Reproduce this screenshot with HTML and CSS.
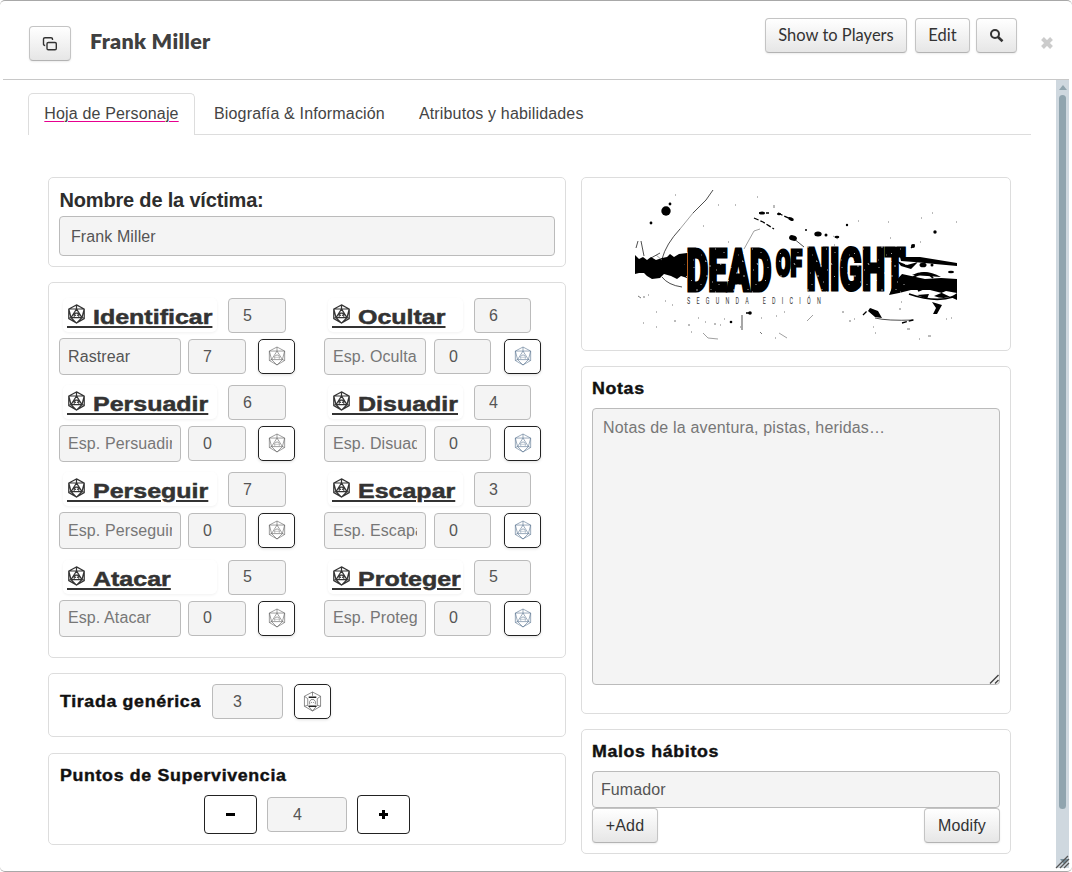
FILE: index.html
```html
<!DOCTYPE html>
<html lang="es">
<head>
<meta charset="utf-8">
<title>Frank Miller</title>
<link rel="stylesheet" href="styles.css">
</head>
<body>
<svg class="defs" aria-hidden="true">
  <symbol id="d20" viewBox="0 0 20 22">
    <path d="M10 1 18.5 5.5V16L10 21 1.500 16V5.500ZM10 1V5.500M1.500 5.500 10 5.500 18.500 5.500M10 5.500 4 15H16ZM1.500 5.500 4 15 10 21 16 15 18.500 5.500M1.500 16 4 15M18.500 16 16 15M7.500 14V11.500L9 10H11L12.500 11.500V14M8.500 12.500H9.500M10.500 12.500H11.500" fill="none" stroke="currentColor"/>
  </symbol>
  <symbol id="grip" viewBox="0 0 10 10"><path d="M1 9.500 9.500 1M6 9.500 9.500 6" fill="none" stroke="#444" stroke-width="1.400"/></symbol>
</svg>
<div class="dialog">
  <header class="titlebar">
    <button class="btn popout"><svg width="16" height="16" viewBox="0 0 16 16" fill="none" stroke="#333" stroke-width="1.400"><path d="M3.200 9.500H3Q1.500 9.500 1.500 8V3Q1.500 1.700 3 1.700H9Q10.500 1.700 10.500 3V4"/><rect x="5" y="6.500" width="9.300" height="7.300" rx="1.300"/></svg></button>
    <h1 class="name">Frank Miller</h1>
    <div class="actions">
      <button class="btn">Show to Players</button>
      <button class="btn">Edit</button>
      <button class="btn search"><svg width="15" height="15" viewBox="0 0 15 15" fill="none" stroke="#333"><circle cx="6" cy="6" r="4" stroke-width="2"/><path d="M9 9 13.500 13.200" stroke-width="2.600"/></svg></button>
    </div>
    <svg class="close" width="14" height="14" viewBox="0 0 14 14"><path d="M2.500 2.500 11.500 11.500M11.500 2.500 2.500 11.500" stroke="#ccc" stroke-width="4"/></svg>
  </header>
  <div class="body">
    <main class="content">
      <nav class="tabs">
        <a class="tab active"><span>Hoja de Personaje</span></a>
        <a class="tab">Biografía &amp; Información</a>
        <a class="tab">Atributos y habilidades</a>
      </nav>
      <div class="sheet">
        <div class="left">
          <section class="card victim">
            <h2 class="victim-label">Nombre de la víctima:</h2>
            <input class="field full" value="Frank Miller">
          </section>
          <section class="card skills">
            <div class="skill">
              <div class="top"><button class="roll"><svg class="die"><use href="#d20"/></svg><span>Identificar</span></button><input class="field num" value="5"></div>
              <div class="bottom"><input class="field spec" value="Rastrear"><input class="field num" value="7"><button class="dice"><svg class="die"><use href="#d20"/></svg></button></div>
            </div>
            <div class="skill narrow">
              <div class="top"><button class="roll"><svg class="die"><use href="#d20"/></svg><span>Ocultar</span></button><input class="field num" value="6"></div>
              <div class="bottom"><input class="field spec" placeholder="Esp. Ocultar"><input class="field num" value="0"><button class="dice blue"><svg class="die"><use href="#d20"/></svg></button></div>
            </div>
            <div class="skill">
              <div class="top"><button class="roll"><svg class="die"><use href="#d20"/></svg><span>Persuadir</span></button><input class="field num" value="6"></div>
              <div class="bottom"><input class="field spec" placeholder="Esp. Persuadir"><input class="field num" value="0"><button class="dice"><svg class="die"><use href="#d20"/></svg></button></div>
            </div>
            <div class="skill narrow">
              <div class="top"><button class="roll"><svg class="die"><use href="#d20"/></svg><span>Disuadir</span></button><input class="field num" value="4"></div>
              <div class="bottom"><input class="field spec" placeholder="Esp. Disuadir"><input class="field num" value="0"><button class="dice blue"><svg class="die"><use href="#d20"/></svg></button></div>
            </div>
            <div class="skill">
              <div class="top"><button class="roll"><svg class="die"><use href="#d20"/></svg><span>Perseguir</span></button><input class="field num" value="7"></div>
              <div class="bottom"><input class="field spec" placeholder="Esp. Perseguir"><input class="field num" value="0"><button class="dice"><svg class="die"><use href="#d20"/></svg></button></div>
            </div>
            <div class="skill narrow">
              <div class="top"><button class="roll"><svg class="die"><use href="#d20"/></svg><span>Escapar</span></button><input class="field num" value="3"></div>
              <div class="bottom"><input class="field spec" placeholder="Esp. Escapar"><input class="field num" value="0"><button class="dice blue"><svg class="die"><use href="#d20"/></svg></button></div>
            </div>
            <div class="skill">
              <div class="top"><button class="roll"><svg class="die"><use href="#d20"/></svg><span>Atacar</span></button><input class="field num" value="5"></div>
              <div class="bottom"><input class="field spec" placeholder="Esp. Atacar"><input class="field num" value="0"><button class="dice"><svg class="die"><use href="#d20"/></svg></button></div>
            </div>
            <div class="skill narrow">
              <div class="top"><button class="roll"><svg class="die"><use href="#d20"/></svg><span>Proteger</span></button><input class="field num" value="5"></div>
              <div class="bottom"><input class="field spec" placeholder="Esp. Proteger"><input class="field num" value="0"><button class="dice blue"><svg class="die"><use href="#d20"/></svg></button></div>
            </div>
          </section>
          <section class="card generic">
            <h3 class="label">Tirada genérica</h3>
            <input class="field" value="3">
            <button class="dice"><svg width="19" height="21" viewBox="0 0 20 22" fill="none" stroke="#555"><path stroke-width=".7" d="M10 1 18.500 5.500V16L10 21 1.500 16V5.500ZM1.500 5.500 5 8V15L1.500 16M18.500 5.500 15 8V15L18.500 16M5 15 10 21 15 15M10 1V5M7 14V11L8.500 9H11.500L13 11V14M8.500 12H9.500M10.500 12H11.500"/><path d="M6 6.500H14M6 16H14" stroke="#222" stroke-width="1.600"/></svg></button>
          </section>
          <section class="card points">
            <h3 class="label">Puntos de Supervivencia</h3>
            <div class="stepper"><button class="step"><i class="minus"></i></button><input class="field" value="4"><button class="step"><i class="minus plus"></i></button></div>
          </section>
        </div>
        <div class="right">
          <section class="card logo">
            <svg width="428" height="172" viewBox="582 178 428 172">
              <defs>
                <pattern id="wear" width="37" height="43" patternUnits="userSpaceOnUse"><path d="M2 3h1v1M7 7v2M17 5l1 2M13 12h1M4 17v2M20 18l1 1M9 24h1M16 26v1M28 9v1M33 15h1M25 22l1 1M31 31v2M12 34h1M3 38l1 1M21 37v1M35 40h.7M8 31v1M27 2h.7M35 26v1" fill="none" stroke="#fff" stroke-width=".65"/></pattern>
              </defs>
              <path d="M635 255 639 259 643 257 647 260 651 257 656 260 662 258 667 257 670 254 674 257 679 254 687 253V278L681 276 677 279 671 276 664 274 660 278 652 279 647 276 644 273 639 273 635 274Z"/>
              <path d="M900 257 920 257 957 263V266L935 264 914 262 901 261ZM897 261 907 265 918 262 911 269 901 266ZM902 274 925 279 941 278 957 279V300L942 293 930 290 911 290 899 293 889 295 894 283ZM912 275Q925 268 941 277 928 276 912 275M917 295 929 294 927 299ZM934 296Q947 301 957 293L946 291M870 308 878 311 882 318 875 317 868 311ZM932 302 942 305 937 314 933 314 936 308Z"/>
              <path d="M911 279Q925 268 933 278M918 291Q930 284 944 291M909 294Q935 303 953 297" fill="none" stroke="#000" stroke-width="1.800"/>
              <g fill="none" stroke="#000" stroke-width=".7">
                <path d="M662 259Q666 244 680 229M651 258 660 253M644 256 641 241M636 248 638 241M662 277Q668 285 682 287M742 315V330M875 318Q887 321 914 320M793 238 804 247"/>
                <path stroke="#777" d="M680 229 693 213M703 333 708 338 718 339M779 333 787 338M744 249 754 231 760 229M833 236 838 239M807 321 813 315M656 255 662 260"/>
                <path d="M693 213 706 200 713 190"/>
                <path stroke-width="1.300" d="M754 218 763 222 774 229M759 213H769M778 213 784 216 793 220M746 313H753M863 315 867 311M902 323 913 320M911 248 915 244" stroke-dasharray="5 2"/>
              </g>
              <g>
                <circle cx="666" cy="211" r="4.700"/><circle cx="670" cy="204" r="1.400"/><circle cx="651" cy="223" r="1.400"/>
                <ellipse cx="762" cy="213" rx="3" ry="1.600"/><ellipse cx="779" cy="214" rx="2" ry="1.300"/><ellipse cx="791" cy="219" rx="3" ry="1.600" transform="rotate(25 791 219)"/><ellipse cx="793" cy="238" rx="4" ry="2.700" transform="rotate(15 793 238)"/><ellipse cx="818" cy="234" rx="3.700" ry="2.500"/><circle cx="826" cy="235" r="1.500"/><ellipse cx="837" cy="237" rx="2.300" ry="1.300"/><circle cx="847" cy="225" r="1.200"/><circle cx="935" cy="232" r="1.700"/><circle cx="913" cy="246" r="2"/><ellipse cx="923" cy="265" rx="3.500" ry="2.300"/><ellipse cx="951" cy="272" rx="3" ry="1.200"/><circle cx="932" cy="265" r="1.500"/><circle cx="731" cy="322" r="1.300"/><circle cx="750" cy="313" r="1.800"/><ellipse cx="873" cy="312" rx="4" ry="2" transform="rotate(40 873 312)"/><circle cx="806" cy="230" r="1"/>
              </g>
              <path d="M675 195h1M718 205h1M735 205h1M757 197h1M703 226h1M736 264h1M728 242h1M638 296l3 2M643 297h2M648 295h1M665 301h1M672 305h1M656 312h1M674 321h2M688 325h2M698 318h1M705 322h1M714 324h2M720 325h1M724 319h1M740 327h1M691 332h1M656 327h1M643 323h1M761 318h1M776 316h1M784 312h1M775 338h1M842 312h2M849 321h2M854 319h1M858 221h1M888 222h1M921 218h1M932 213h1M956 222h1M834 245h1M890 238h1M920 242h1M901 302h1M899 309h2M873 327h1M875 333h1M907 329h3M919 339h1M928 336h3M946 319h1M951 318h1M774 205v3M760 332l2 2" fill="none" stroke="#777" stroke-width="1"/>
              <g class="wordmark">
                <text x="686.500" y="290.500" font-size="59" textLength="85" lengthAdjust="spacingAndGlyphs">DEAD</text>
                <text x="776" y="275.500" font-size="37" textLength="26" lengthAdjust="spacingAndGlyphs">OF</text>
                <text x="806.500" y="290" font-size="59" textLength="99" lengthAdjust="spacingAndGlyphs">NIGHT</text>
              </g>
              <rect x="684" y="246" width="222" height="47" fill="url(#wear)"/>
              <text class="subtitle" transform="translate(687 304) scale(.6 1)" font-size="9" textLength="223">SEGUNDA EDICIÓN</text>
            </svg>
          </section>
          <section class="card notes">
            <h3 class="label">Notas</h3>
            <div class="area-wrap"><textarea class="field area" placeholder="Notas de la aventura, pistas, heridas…"></textarea><svg class="grip"><use href="#grip"/></svg></div>
          </section>
          <section class="card habits">
            <h3 class="label">Malos hábitos</h3>
            <input class="field habit" value="Fumador">
            <div class="habit-actions"><button class="btn arial add">+Add</button><button class="btn arial modify">Modify</button></div>
          </section>
        </div>
      </div>
    </main>
    <div class="scrollbar"><i class="arrow"></i><div class="thumb"></div></div>
  </div>
  <svg class="resize" width="15" height="15" viewBox="0 0 15 15"><path d="M5 5H14L9 10Z" fill="#78909c"/><path d="M1 14 13 2M5 14 14 5M9 14 14 9" stroke="#555" stroke-width="1.300"/></svg>
</div>
</body>
</html>
```
FILE: styles.css
```css
* { box-sizing: border-box; }
body { margin: 0; background: #fff; color: #333; font: 16px "Liberation Sans", Arial, sans-serif; }
button, input, textarea { font: inherit; margin: 0; }
h1, h2, h3 { margin: 0; }
.defs { position: absolute; width: 0; height: 0; }
.dialog { position: relative; width: 1072px; height: 872px; border: 1px solid #a8a8a8; border-width: 1px 0; border-radius: 5px; overflow: hidden; padding: 0 3px; }
.titlebar { height: 79px; border-bottom: 1px solid #c8c8c8; display: flex; align-items: flex-start; padding: 0 15px 0 26px; }
.btn { height: 35px; border: 1px solid #c4c4c4; border-bottom-color: #b3b3b3; border-radius: 4px; background: linear-gradient(#fff, #e6e6e6); box-shadow: 0 1px 2px rgba(0,0,0,.08); color: #333; padding: 0 12px; font-family: Lato, sans-serif; font-size: 16.5px; line-height: 31px; white-space: nowrap; }
.popout { width: 42px; margin-top: 25px; padding: 0; line-height: 0; }
.name { font: 800 21.5px/30px Lato, sans-serif; letter-spacing: .3px; color: #404040; margin: 25px auto 0 19px; }
.actions { display: flex; margin-top: 17px; }
.actions .btn:first-child { width: 142px; margin-right: 8px; }
.actions .btn:nth-child(2) { width: 55px; margin-right: 6px; }
.search { width: 41px; padding: 0; line-height: 0; }
.close { margin: 35px 0 0 23px; }
.body { display: flex; justify-content: space-between; height: 788px; }
.content { padding: 13px 0 0 25px; width: 1028px; }
.tabs { display: flex; height: 42px; border-bottom: 1px solid #ddd; color: #444; letter-spacing: .16px; }
.tab { height: 42px; line-height: 41px; padding: 0 17px; }
.tab.active { border: 1px solid #ddd; border-bottom: 0; border-radius: 5px 5px 0 0; background: #fff; padding: 0; width: 167px; text-align: center; margin-right: 2px; line-height: 39px; }
.active span { text-decoration-line: underline; text-decoration-color: #e6008f; text-decoration-thickness: 1px; text-underline-offset: 2px; }
.sheet { display: flex; gap: 15px; padding: 42px 0 0 20px; }
.left { width: 518px; }
.right { width: 430px; }
.card { border: 1px solid #ddd; border-radius: 5px; padding: 10px; }
.victim { height: 90px; }
.victim-label { font-size: 20px; line-height: 24px; letter-spacing: -.18px; margin: 0 0 4px .5px; color: #2d2d2d; }
.field { display: block; border: 1px solid #bbb; border-radius: 4px; background: #f4f4f4; color: #555; outline: 0; padding: 0 10px; min-width: 0; letter-spacing: .1px; }
.field::placeholder { color: #777; }
.full { width: 496px; height: 40px; padding: 1px 11px 0; }
.skills { height: 376px; margin-top: 15px; padding-top: 15px; display: grid; grid-template-columns: 265px 218px; grid-template-rows: repeat(4, 87.2px); }
.top { display: flex; justify-content: space-between; width: 227px; padding-left: 4px; }
.bottom { display: flex; align-items: center; margin-top: 5px; }
.num { width: 58px; height: 35px; padding: 0 14px; }
.spec { width: 122px; height: 37px; padding: 0 8px; margin-right: 7px; }
.roll { position: relative; width: 154px; height: 34px; border: 0; border-radius: 5px; box-shadow: 0 1px 3px rgba(0,0,0,.06); background: #fff; color: #333; padding: 0 0 0 4px; display: flex; align-items: flex-start; }
.roll .die { flex: none; width: 19px; height: 20px; margin: 6px 0 0; stroke-width: 1.35; }
.roll span { display: block; font: bold 21px/26px "Liberation Sans", Arial, sans-serif; -webkit-text-stroke: .5px #333; transform: scaleX(1.19); transform-origin: left; margin: 6px 0 0 7px; text-decoration: underline; text-decoration-thickness: 2px; text-underline-offset: 2px; }
.roll::before { content: ""; position: absolute; left: 4px; top: 28px; width: 27px; height: 2px; background: #333; }
.narrow .top { width: 207px; }
.narrow .roll { width: 135px; }
.narrow .num { width: 57px; }
.narrow .spec { width: 102px; margin-right: 8px; }
.dice { width: 37px; height: 35px; border: 1px solid #222; border-radius: 5px; background: #fff; box-shadow: 0 1px 3px rgba(0,0,0,.12); display: flex; align-items: center; justify-content: center; padding: 0 0 1px; color: #666; margin-left: 12px; }
.narrow .dice { margin-left: 13px; }
.dice .die { width: 18px; height: 20px; stroke-width: .7; }
.dice.blue { color: #5f7995; }
.label { font: bold 16px/20px "Liberation Sans", Arial, sans-serif; -webkit-text-stroke: .4px #111; letter-spacing: .6px; transform: scaleX(1.11); transform-origin: left; color: #111; white-space: nowrap; }
.generic { height: 64px; margin-top: 15px; display: flex; }
.generic .label { width: 152px; margin: 8px 0 0 1px; }
.generic .field { width: 71px; height: 35px; padding: 0 20px; }
.generic .dice { margin-left: 11px; }
.points { height: 92px; margin-top: 16px; padding-top: 12px; }
.points .label { margin-left: 1px; }
.stepper { display: flex; justify-content: center; align-items: center; gap: 10px; margin-top: 9px; }
.stepper .field { width: 80px; height: 35px; padding: 0 25px; }
.step { width: 53px; height: 39px; border: 1px solid #222; border-radius: 4px; background: #fff; display: flex; align-items: center; justify-content: center; padding: 0; }
.minus { width: 9px; height: 3px; background: #000; }
.plus { height: 9px; background: linear-gradient(#000, #000) center/9px 3px no-repeat, linear-gradient(#000, #000) center/3px 9px no-repeat; }
.logo { height: 174px; padding: 0; }
.logo svg { display: block; }
.wordmark { font-family: Roboto, sans-serif; font-weight: 900; stroke: #000; stroke-width: 3.2; }
.subtitle { font-family: Roboto, sans-serif; fill: #333; }
.notes { height: 348px; margin-top: 15px; padding-top: 12px; }
.area-wrap { position: relative; margin-top: 9px; }
.area { width: 408px; height: 277px; padding: 10px; resize: none; letter-spacing: .17px; }
.grip { position: absolute; right: 1px; bottom: 1px; width: 10px; height: 10px; }
.habits { height: 125px; margin-top: 15px; padding-top: 12px; }
.habit { width: 408px; height: 37px; padding: 0 8px; margin-top: 9px; }
.habit-actions { display: flex; justify-content: space-between; }
.arial { font: 16px/31px "Liberation Sans", Arial, sans-serif; letter-spacing: .15px; padding: 0; }
.add { width: 66px; }
.modify { width: 76px; }
.scrollbar { width: 13px; background: #cfd8df; padding-top: 5px; display: flex; flex-direction: column; align-items: center; }
.arrow { border: 4.5px solid transparent; border-top: 0; border-bottom: 5px solid #90a4ae; }
.thumb { width: 7px; height: 714px; margin-top: 5px; border-radius: 4px; background: #90a4ae; }
.resize { position: absolute; right: 2px; bottom: 2px; }
```
